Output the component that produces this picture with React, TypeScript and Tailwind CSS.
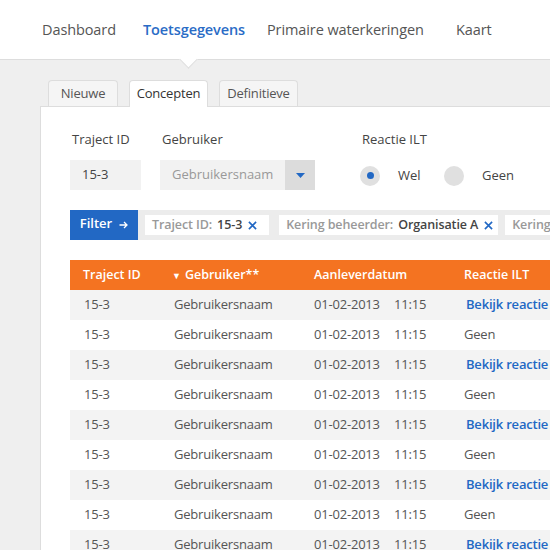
import React from "react";

const NAV = [
  { label: "Dashboard", w: "w-[101px]" },
  { label: "Toetsgegevens", w: "w-[124px]", active: true },
  { label: "Primaire waterkeringen", w: "w-[189px]" },
  { label: "Kaart", w: "w-[60px]" },
];

const ROWS = Array.from({ length: 9 }, (_, i) => ({
  id: "15-3",
  user: "Gebruikersnaam",
  date: "01-02-2013",
  time: "11:15",
  reactie: i % 2 === 0 ? "Bekijk reactie" : "Geen",
}));

function Chip({ label, value, className = "" }: { label: string; value?: string; className?: string }) {
  return (
    <div
      className={`flex h-[20px] shrink-0 items-center bg-white pl-[7px] text-[12.5px] font-semibold tracking-[-0.1px] ${className}`}
    >
      <span className="text-[#999]">{label}</span>
      {value && <span className="ml-[5px] text-[#444]">{value}</span>}
      {value && (
        <svg width="9" height="9" viewBox="0 0 10 10" className="ml-[6px]">
          <path d="M1 1 L9 9 M9 1 L1 9" stroke="#2268c4" strokeWidth="1.8" />
        </svg>
      )}
    </div>
  );
}

export default function App() {
  return (
    <div className="h-[550px] w-full overflow-hidden bg-[#efefef] font-['Open_Sans',sans-serif] text-[#444]">
      <header className="relative h-[60px] border-b border-[#dddddd] bg-white">
        <nav className="flex h-full items-center pl-[42px] text-[14.5px] tracking-[-0.1px]">
          {NAV.map((n) => (
            <span
              key={n.label}
              className={`${n.w} shrink-0 whitespace-nowrap ${
                n.active ? "font-semibold text-[#2a6cc6]" : "text-[#555]"
              }`}
            >
              {n.label}
            </span>
          ))}
        </nav>
        <div className="absolute left-[182px] top-[53px] h-[13px] w-[13px] rotate-45 border-b border-r border-[#dddddd] bg-white" />
      </header>

      <div className="flex gap-[11px] pl-[48px] pt-[20px] text-[13px] tracking-[-0.2px]">
        <div className="flex h-[26px] w-[70px] items-center justify-center rounded-t-[4px] border border-b-0 border-[#dddddd] bg-[#f5f5f5] text-[#555]">
          Nieuwe
        </div>
        <div className="relative z-10 -mb-px flex h-[27px] w-[79px] items-center justify-center rounded-t-[4px] border border-b-0 border-[#dddddd] bg-white text-[#333]">
          Concepten
        </div>
        <div className="flex h-[26px] w-[79px] items-center justify-center rounded-t-[4px] border border-b-0 border-[#dddddd] bg-[#f5f5f5] text-[#555]">
          Definitieve
        </div>
      </div>

      <section className="ml-[40px] h-[500px] border-l border-t border-[#dddddd] bg-white pl-[29px] pt-[23px]">
        <div className="flex text-[13px]">
          <div className="w-[90px] shrink-0">
            <div className="mb-[12px] pl-[2px] leading-[18px] text-[#444]">Traject ID</div>
            <div className="flex h-[30px] w-[71px] items-center bg-[#f2f2f2] pl-[12px] text-[#444]">15-3</div>
          </div>
          <div className="w-[200px] shrink-0">
            <div className="mb-[12px] pl-[2px] leading-[18px] text-[#444]">Gebruiker</div>
            <div className="flex h-[30px] w-[155px]">
              <div className="flex flex-1 items-center bg-[#f2f2f2] pl-[12px] text-[#999]">Gebruikersnaam</div>
              <div className="flex w-[30px] items-center justify-center bg-[#dcdcdc]">
                <svg width="9" height="5" viewBox="0 0 9 5">
                  <path d="M0 0 H9 L4.5 5 Z" fill="#2268c4" />
                </svg>
              </div>
            </div>
          </div>
          <div className="shrink-0">
            <div className="mb-[12px] pl-[2px] leading-[18px] text-[#444]">Reactie ILT</div>
            <div className="flex h-[30px] items-center pt-px">
              <div className="flex h-[20px] w-[20px] items-center justify-center rounded-full bg-[#e0e0e0]">
                <div className="h-[7px] w-[7px] rounded-full bg-[#2268c4]" />
              </div>
              <span className="ml-[18px] w-[46px] text-[#444]">Wel</span>
              <div className="h-[20px] w-[20px] rounded-full bg-[#e0e0e0]" />
              <span className="ml-[18px] text-[#444]">Geen</span>
            </div>
          </div>
        </div>

        <div className="mt-[20px] flex h-[30px] w-[600px]">
          <button
            type="button"
            className="flex w-[68px] shrink-0 items-center justify-center gap-[7px] bg-[#2268c4] pb-[2px] text-[13px] font-semibold text-white"
          >
            Filter
            <svg width="9" height="8" viewBox="0 0 9 8" className="mt-[2px]">
              <path d="M0.5 4 H8 M5 1 L8 4 L5 7" stroke="white" strokeWidth="1.3" fill="none" />
            </svg>
          </button>
          <div className="flex flex-1 items-center bg-[#ececec] pl-[7px]">
            <Chip label="Traject ID:" value="15-3" className="pr-[12px]" />
            <Chip label="Kering beheerder:" value="Organisatie A" className="ml-[10px] pr-[5px]" />
            <Chip label="Kering beheerder:" className="ml-[7px]" />
          </div>
        </div>

        <table className="mt-[20px] w-[600px] table-fixed border-collapse text-left text-[13px]">
          <colgroup>
            <col className="w-[89px]" />
            <col className="w-[142px]" />
            <col className="w-[150px]" />
            <col />
          </colgroup>
          <thead>
            <tr className="h-[30px] bg-[#f47321] text-[12.5px] text-white">
              <th className="pl-[13px] font-semibold">Traject ID</th>
              <th className="pl-[13px] font-semibold">
                <span className="mr-[4px] text-[9px]">▼</span>Gebruiker**
              </th>
              <th className="pl-[13px] font-semibold">Aanleverdatum</th>
              <th className="pl-[13px] font-semibold">Reactie ILT</th>
            </tr>
          </thead>
          <tbody className="tracking-[-0.2px]">
            {ROWS.map((r, i) => (
              <tr key={i} className={`h-[30px] ${i % 2 === 0 ? "bg-[#f3f3f3]" : "bg-white"}`}>
                <td className="pl-[14px] text-[#555]">{r.id}</td>
                <td className="pl-[15px] text-[#555]">{r.user}</td>
                <td className="pl-[13px] text-[#555]">
                  <span className="inline-block w-[80px]">{r.date}</span>
                  {r.time}
                </td>
                <td
                  className={
                    r.reactie === "Geen"
                      ? "pl-[13px] text-[#555]"
                      : "pl-[15px] font-semibold text-[#2268c4]"
                  }
                >
                  {r.reactie}
                </td>
              </tr>
            ))}
          </tbody>
        </table>
      </section>
    </div>
  );
}
